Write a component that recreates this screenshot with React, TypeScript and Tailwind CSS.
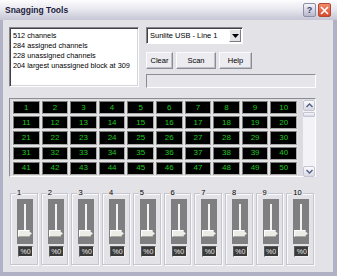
import { Fragment } from 'react'

const cells = Array.from({ length: 50 }, (_, i) => i + 1)
const faders = Array.from({ length: 10 }, (_, i) => i + 1)

const TitleBar = () => (
  <div className="h-[20px] flex items-center justify-between pl-[5px] pr-[6px] bg-gradient-to-b from-[#fdfdfe] via-[#e6e6ee] to-[#c5c5d5]">
    <span className="font-bold text-[8.5px] text-[#1c1c3c]">Snagging Tools</span>
    <div className="flex gap-[2px]">
      <div className="w-[13px] h-[14px] rounded-[2px] border border-[#8e8ea6] bg-gradient-to-b from-[#f4f4fa] to-[#b8b8cc] flex items-center justify-center text-[9px] font-bold text-[#40406a]">?</div>
      <div className="w-[13px] h-[14px] rounded-[2px] border border-[#b04a34] bg-gradient-to-b from-[#f08a6c] to-[#d84a2c] flex items-center justify-center">
        <svg width="9" height="9" viewBox="0 0 9 9">
          <path d="M1 1 L8 8 M8 1 L1 8" stroke="#fff" strokeWidth="1.6" />
        </svg>
      </div>
    </div>
  </div>
)

const Button = ({ label, w }: { label: string; w: string }) => (
  <div className={`${w} h-[17px] flex items-center justify-center bg-[#ecebf0] border border-[#8c8c96] border-t-[#fbfbfd] border-l-[#fbfbfd] shadow-[inset_-1px_-1px_0_#c0c0c8]`}>
    {label}
  </div>
)

const Chevron = ({ down }: { down?: boolean }) => (
  <svg width="7" height="5" viewBox="0 0 7 5">
    <path d={down ? 'M0.5 1 L3.5 4 L6.5 1' : 'M0.5 4 L3.5 1 L6.5 4'} stroke="#4d6185" strokeWidth="1.4" fill="none" />
  </svg>
)

const Fader = ({ n }: { n: number }) => (
  <div className="relative h-[72px] border border-[#c6c6ce] shadow-[inset_1px_1px_0_#fafafc,1px_1px_0_#fafafc]">
    <span className="absolute -top-[5px] left-[5px] px-[1px] bg-[#e3e2e7] leading-none">{n}</span>
    <div className="ml-[6px] mt-[5px] w-[16px] h-[45px] bg-[#7f7f82] relative flex justify-center">
      <div className="mt-[5px] w-[2px] h-[29px] bg-[#f2f2f2]" />
      <div className="absolute left-[1px] top-[31px] w-[12px] h-[7px] bg-[#ecece6] border border-[#a8a8a0] border-t-white border-l-white" />
      <svg className="absolute left-[12px] top-[32px]" width="4" height="5" viewBox="0 0 4 5">
        <path d="M0 0 L3 2.5 L0 5 Z" fill="#ecece6" />
      </svg>
    </div>
    <div className="ml-[7px] mt-[2px] w-[15px] h-[11px] bg-[#3a3a3a] border border-[#5a5a5a] border-b-[#f0f0f0] border-r-[#f0f0f0] flex items-center justify-center text-[#e8e8e8] text-[7px]">
      %0
    </div>
  </div>
)

export default function App() {
  return (
    <div className="w-[337px] h-[276px] bg-[#b1b1c6] flex flex-col font-['Liberation_Sans',Arial,sans-serif] text-[7.5px] text-black leading-none">
      <TitleBar />
      <div className="flex-1 ml-[3px] mr-[4px] mb-[4px] bg-[#e3e2e7] pl-[6px] pt-[7px] flex flex-col">
        <div className="flex gap-[7px]">
          <div className="w-[130px] h-[60px] bg-white border border-[#85858c] border-b-white border-r-white shadow-[inset_1px_1px_0_#404048,inset_-1px_-1px_0_#d4d4dc] pl-[3px] pt-[3px] leading-[10px] text-[7.3px]">
            <div>512 channels</div>
            <div>284 assigned channels</div>
            <div>228 unassigned channels</div>
            <div>204 largest unassigned block at 309</div>
          </div>
          <div className="w-[170px] flex flex-col">
            <div className="w-[97px] h-[17px] bg-white border border-[#85858c] border-b-white border-r-white shadow-[inset_1px_1px_0_#404048] flex items-center justify-between pl-[3px] pr-[1px]">
              <span>Sunlite USB - Line 1</span>
              <div className="w-[12px] h-[13px] bg-[#e3e2e7] border border-[#7c7c84] border-t-white border-l-white flex items-center justify-center">
                <svg width="7" height="4" viewBox="0 0 7 4">
                  <path d="M0 0 L7 0 L3.5 4 Z" fill="#000" />
                </svg>
              </div>
            </div>
            <div className="mt-[8px] flex gap-[3px]">
              <Button label="Clear" w="w-[27px]" />
              <Button label="Scan" w="w-[40px]" />
              <Button label="Help" w="w-[33px]" />
            </div>
            <div className="mt-[5px] w-[170px] h-[14px] border border-[#8c8c94] border-b-white border-r-white bg-[#e6e5ea]" />
          </div>
        </div>

        <div className="mt-[10px] w-[307px] h-[79px] border border-[#8c8c94] border-b-white border-r-white bg-[#dcdce0] flex pl-[2px] pt-[1px]">
          <div className="w-[286px] h-[76px] grid grid-cols-10 grid-rows-5">
            {cells.map((c) => (
              <div key={c} className="bg-[#e4e4e6] p-[1px]">
                <div className="w-full h-full bg-black border-[1.5px] border-[#7a7a7a] border-b-[#a8a8a8] border-r-[#a8a8a8] flex items-center justify-center text-[8px] text-[#1ec81e]">
                  {c}
                </div>
              </div>
            ))}
          </div>
          <div className="ml-[5px] w-[12px] h-[77px] bg-[#f3f3f7] flex flex-col justify-between">
            <div>
              <div className="h-[11px] rounded-[2px] bg-gradient-to-b from-[#fbfbfd] to-[#d8d8e4] border border-[#c4c4d4] flex items-center justify-center">
                <Chevron />
              </div>
              <div className="mt-[1px] h-[5px] rounded-[1px] bg-gradient-to-b from-[#fbfbfd] to-[#d4d4e2] border border-[#c4c4d4]" />
            </div>
            <div className="h-[11px] rounded-[2px] bg-gradient-to-b from-[#fbfbfd] to-[#d8d8e4] border border-[#c4c4d4] flex items-center justify-center">
              <Chevron down />
            </div>
          </div>
        </div>

        <div className="mt-[16px] ml-[1px] w-[304px] grid grid-cols-10 gap-x-[3px]">
          {faders.map((n) => (
            <Fragment key={n}>
              <Fader n={n} />
            </Fragment>
          ))}
        </div>
      </div>
    </div>
  )
}
